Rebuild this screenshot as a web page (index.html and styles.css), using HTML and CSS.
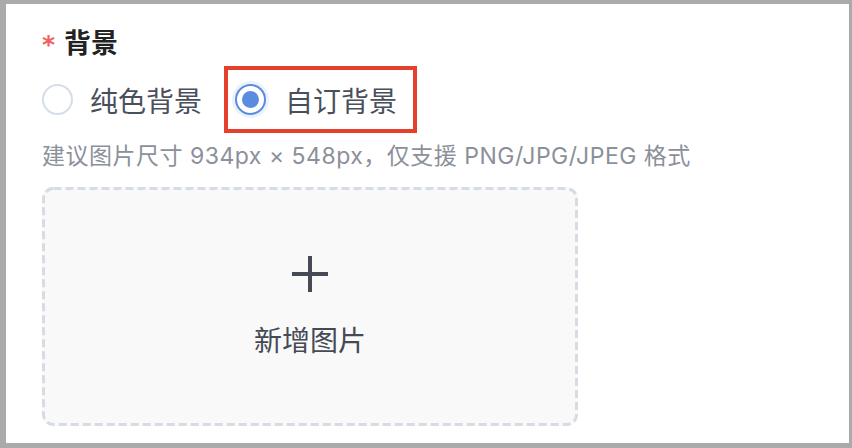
FILE: index.html
```html
<!DOCTYPE html>
<html>
<head>
  <meta charset="utf-8">
  <title>背景设置</title>
  <link rel="stylesheet" href="styles.css">
</head>
<body>
  <div class="panel">
    <div class="field">
      <div class="field-label"><span class="required">*</span>背景</div>

      <div class="radio-group">
        <label class="radio">
          <input type="radio" name="bg-type" value="solid">
          <span class="radio-mark"></span>
          <span class="radio-text">纯色背景</span>
        </label>
        <label class="radio highlight">
          <input type="radio" name="bg-type" value="custom" checked>
          <span class="radio-mark"></span>
          <span class="radio-text">自订背景</span>
        </label>
      </div>

      <p class="hint">建议图片尺寸 934px × 548px，仅支援 PNG/JPG/JPEG 格式</p>

      <div class="upload">
        <!-- dashed outline, drawn in svg so the dash length can be set -->
        <svg class="upload-border" width="536" height="239">
          <rect x="1.5" y="1.5" width="533" height="236" rx="10" ry="10"
                fill="none" stroke="#d5dce4" stroke-width="3" stroke-dasharray="8 4"/>
        </svg>
        <svg class="upload-plus" width="36" height="36" viewBox="0 0 36 36">
          <path d="M18 0 V36 M0 18 H36" stroke="#454a55" stroke-width="4" fill="none"/>
        </svg>
        <span class="upload-text">新增图片</span>
      </div>
    </div>
  </div>
</body>
</html>
```

FILE: styles.css
```css
/* 背景设置 */

html, body {
  margin: 0;
  height: 100%;
}

body {
  background-color: #aaaaaa;
  font-family: "Inter", "Noto Sans CJK SC", sans-serif;
  padding: 4px 3px 5px 6px;
  box-sizing: border-box;
}

.panel {
  background-color: #fff;
  height: 100%;
  padding: 20px 36px 0;
  box-sizing: border-box;
}

.field-label {
  height: 36px;
  font-size: 27px;
  line-height: 36px;
  font-weight: 700;
  color: #222;
  font-family: "Noto Sans CJK SC", sans-serif;
}

.required {
  color: #f06060;
  font-family: "DejaVu Sans", sans-serif;
  font-size: 25px;
  margin-right: 9px;
}

.radio-group {
  display: flex;
  align-items: center;
  gap: 22px;
  margin-top: 6px;
}

.radio {
  display: flex;
  align-items: center;
  height: 67px;
  box-sizing: border-box;
  cursor: pointer;
}

.radio input {
  display: none;
}

.radio-mark {
  width: 31px;
  height: 31px;
  border: 2px solid #d5dde8;
  border-radius: 50%;
  box-sizing: border-box;
  margin-right: 17px;
  position: relative;
}

.radio input:checked + .radio-mark {
  border-color: #5b8be0;
  box-shadow: 0 0 0 3px #ebf2fd;
}

.radio input:checked + .radio-mark::after {
  content: "";
  position: absolute;
  top: 5px;
  left: 5px;
  width: 17px;
  height: 17px;
  border-radius: 50%;
  background-color: #5b8be0;
}

.radio-text {
  font-size: 28px;
  color: #4a4f5c;
  font-family: "Noto Sans CJK SC", sans-serif;
}

.radio.highlight {
  border: 4px solid #e5402b;
  padding: 0 16px 0 7px;
}

.highlight .radio-mark {
  margin-right: 19px;
}

.hint {
  margin: 8px 0 0;
  font-size: 23px;
  line-height: 30px;
  letter-spacing: 0.5px;
  color: #8b909a;
}

.upload {
  position: relative;
  margin-top: 16px;
  width: 536px;
  height: 239px;
  border-radius: 10px;
  background-color: #f9f9f9;
  display: flex;
  flex-direction: column;
  align-items: center;
  justify-content: center;
}

.upload-border {
  position: absolute;
  top: 0;
  left: 0;
}

.upload-text {
  margin-top: 29px;
  font-size: 28px;
  line-height: 36px;
  color: #454a55;
  font-family: "Noto Sans CJK SC", sans-serif;
}
```
